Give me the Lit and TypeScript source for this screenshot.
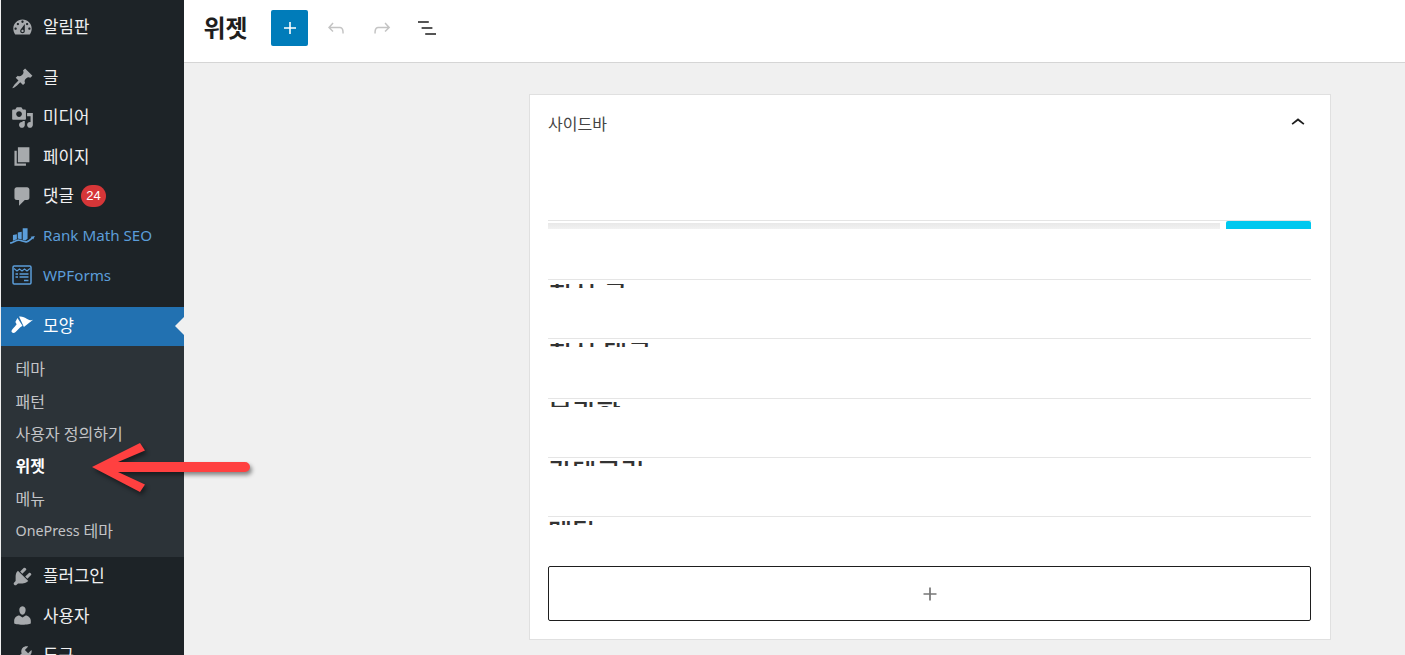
import { LitElement, html, css, svg } from "lit";
import { customElement } from "lit/decorators.js";

const P: Record<string, string> = {
  dash: "M3.76 16h12.48c1.1-1.37 1.76-3.11 1.76-5 0-4.42-3.58-8-8-8s-8 3.58-8 8c0 1.89.66 3.63 1.76 5zM10 4c.55 0 1 .45 1 1s-.45 1-1 1-1-.45-1-1 .45-1 1-1zM6 6c.55 0 1 .45 1 1s-.45 1-1 1-1-.45-1-1 .45-1 1-1zm8 0c.55 0 1 .45 1 1s-.45 1-1 1-1-.45-1-1 .45-1 1-1zm-5.37 5.55L12 7v6c0 1.1-.9 2-2 2s-2-.9-2-2c0-.57.24-1.08.63-1.45zM4 10c.55 0 1 .45 1 1s-.45 1-1 1-1-.45-1-1 .45-1 1-1zm12 0c.55 0 1 .45 1 1s-.45 1-1 1-1-.45-1-1 .45-1 1-1zm-5 3c0-.55-.45-1-1-1s-1 .45-1 1 .45 1 1 1 1-.45 1-1z",
  post: "M10.44 3.02l1.82-1.82 6.36 6.35-1.83 1.82c-1.05-.68-2.48-.57-3.41.36l-.75.75c-.92.93-1.04 2.35-.35 3.41l-1.83 1.82-2.41-2.41-2.8 2.79c-.42.42-3.38 2.71-3.8 2.29s1.86-3.39 2.28-3.81l2.79-2.79L4.1 9.36l1.83-1.82c1.05.69 2.48.57 3.4-.36l.75-.75c.93-.92 1.05-2.35.36-3.41z",
  media: "M13 11V4c0-.55-.45-1-1-1h-1.67L9 1H5L3.67 3H2c-.55 0-1 .45-1 1v7c0 .55.45 1 1 1h10c.55 0 1-.45 1-1zM7 4.5c1.38 0 2.5 1.12 2.5 2.5S8.38 9.5 7 9.5 4.5 8.38 4.5 7 5.62 4.5 7 4.5zM14 6h5v10.5c0 1.38-1.12 2.5-2.5 2.5S14 17.88 14 16.5s1.12-2.5 2.5-2.5c.17 0 .34.02.5.05V9h-3V6zm-4 8.05V13h2v3.5c0 1.38-1.12 2.5-2.5 2.5S7 17.88 7 16.5 8.12 14 9.5 14c.17 0 .34.02.5.05z",
  page: "M6 15V2h10v13H6zm-1 1h8v2H3V5h2v11z",
  comments: "M5 2h9c1.1 0 2 .9 2 2v7c0 1.1-.9 2-2 2h-2l-5 5v-5H5c-1.1 0-2-.9-2-2V4c0-1.1.9-2 2-2z",
  appearance: "M7 1.400C9.500 .9 12 2.400 14 3.400s3.800 1.500 5.200.7L11.200 10.400zM5.600 2.700L10 9.400l-1.900 1.200-1.100 1.100-3 3C2.500 16.200.3 15.600.4 14c.1-1 1.600-2.500 3-4l1.500-2-1.100-2z",
  plugins: "M13.11 4.36L9.87 7.6 8 5.73l3.24-3.24c.35-.34 1.05-.2 1.56.32.52.51.66 1.21.31 1.55zm-8 1.77l.91-1.12 9.01 9.01-1.19.84c-.71.71-2.63 1.16-3.82 1.16H6.14L4.9 17.26c-.59.59-1.54.59-2.12 0-.59-.58-.59-1.53 0-2.12l1.24-1.24v-3.88c0-1.13.4-3.19 1.09-3.89zm7.26 3.97l3.24-3.24c.34-.35 1.04-.21 1.55.31.52.51.66 1.21.31 1.55l-3.24 3.25z",
  users: "M10 9.25c-2.27 0-2.73-3.44-2.73-3.44C7 4.02 7.82 2 9.97 2c2.16 0 2.98 2.02 2.71 3.81 0 0-.41 3.44-2.68 3.44zm0 2.57L12.72 10c2.39 0 4.52 2.33 4.52 4.53v2.49s-3.65 1.13-7.24 1.13c-3.65 0-7.24-1.13-7.24-1.13v-2.49c0-2.25 1.94-4.48 4.47-4.48z",
  tools: "M16.68 9.77c-1.34 1.34-3.3 1.67-4.95.99l-5.41 6.52c-.99.99-2.59.99-3.58 0s-.99-2.59 0-3.57l6.52-5.42c-.68-1.65-.35-3.61.99-4.95 1.28-1.28 3.12-1.62 4.72-1.06l-2.89 2.89 2.82 2.82 2.86-2.87c.53 1.58.18 3.39-1.08 4.65zM3.81 16.21c.4.39 1.04.39 1.43 0 .4-.4.4-1.04 0-1.43-.39-.4-1.03-.4-1.43 0-.39.39-.39 1.03 0 1.43z",
};

const icon = (k: string) => html`<svg class="ico" viewBox="0 0 20 20" fill="currentColor"><path fill-rule="evenodd" d=${P[k]}></path></svg>`;

const rankMath = html`<svg class="ico wide" viewBox="0 0 24 20" fill="currentColor">
  <path d="M3.500 9.600L7 8.800V13.400l-3.500 1.200zM7.800 7.400l3.500-.8v7l-3.500-.9zM12.200 3.500h4.300v9.300l-2 1.600-2.300-.5z"></path>
  <path d="M1 16.800C4 16 6.500 14 9 14.200s4 1.800 6.500 1.400c2-.4 3.500-2 5.300-3.600" fill="none" stroke="currentColor" stroke-width="1.500"></path>
  <path d="M23 10.500l-3.800.6 2.300 2.500z"></path>
</svg>`;

const wpforms = html`<svg class="ico form" viewBox="0 0 20 20" fill="none" stroke="currentColor">
  <rect x="1" y="1" width="18" height="18" rx="1.200" stroke-width="1.500"></rect>
  <path d="M2 3.500l3 2.500 2.500-2 2.500 2 2.500-2 2.500 2 3-2.500" stroke-width="1.100"></path>
  <path d="M3.500 9h2.500M7.500 9h9M3.500 12h2.500M7.500 12h9M12 15.500h4.500" stroke-width="1.300"></path>
</svg>`;

type Item = { t: string; i: unknown; blue?: boolean; badge?: string };
const top: Item[] = [
  { t: "글", i: icon("post") },
  { t: "미디어", i: icon("media") },
  { t: "페이지", i: icon("page") },
  { t: "댓글", i: icon("comments"), badge: "24" },
  { t: "Rank Math SEO", i: rankMath, blue: true },
  { t: "WPForms", i: wpforms, blue: true },
];
const subs = ["테마", "패턴", "사용자 정의하기", "위젯", "메뉴"];
const bottom: Item[] = [
  { t: "플러그인", i: icon("plugins") },
  { t: "사용자", i: icon("users") },
  { t: "도구", i: icon("tools") },
];
const widgets = ["최신 글", "최신 댓글", "보관함", "카테고리", "메타"];

@customElement("app-root")
export class AppRoot extends LitElement {
  static styles = css`
    :host {
      display: block;
      position: relative;
      width: 1405px;
      height: 655px;
      overflow: hidden;
      background: #f0f0f0;
      font-family: "Noto Sans", "Noto Sans CJK KR", sans-serif;
    }
    .layout { display: flex; height: 655px; padding-left: 1px; box-sizing: border-box; }
    .side {
      width: 183px;
      flex: none;
      background: #1d2327;
      padding-top: 7.5px;
      box-sizing: border-box;
      overflow: hidden;
    }
    .item {
      display: flex;
      align-items: center;
      height: 39.3px;
      padding-left: 10px;
      color: #f0f0f1;
      font-size: 16.8px;
      line-height: 22px;
      white-space: nowrap;
      position: relative;
    }
    .item .ico { width: 23px; height: 23px; color: #a7aaad; flex: none; }
    .item .ico.wide { width: 27px; margin-left: -2px; margin-right: -2px; }
    .item .ico.form { width: 20px; height: 20px; margin-left: 1px; margin-right: 2px; }
    .item .label { margin-left: 9px; }
    .item.blue { color: #5b9dd9; font-size: 15.2px; }
    .item.blue .ico { color: #5b9dd9; }
    .group { margin-top: 11.7px; }
    .badge {
      margin-left: 7px;
      height: 22px;
      min-width: 25px;
      border-radius: 11px;
      background: #d63638;
      color: #fff;
      font-family: "Liberation Sans", sans-serif;
      font-size: 13px;
      display: flex;
      align-items: center;
      justify-content: center;
    }
    .active {
      margin-top: 12.7px;
      height: 39px;
      background: #2271b1;
      color: #fff;
    }
    .active .ico { color: #fff; }
    .active::after {
      content: "";
      position: absolute;
      right: 0;
      top: 10px;
      border: 9px solid transparent;
      border-right-color: #f0f0f0;
      border-left-width: 0;
    }
    .submenu { background: #2c3338; padding: 7px 0 9.5px; }
    .sub {
      height: 32.4px;
      display: flex;
      align-items: center;
      padding-left: 14.5px;
      font-size: 16px;
      line-height: 20px;
      color: #c3c4c7;
      white-space: nowrap;
    }
    .sub.on { color: #fff; font-weight: 700; }
    .sub .latin { font-size: 14.3px; margin-right: 4px; }
    .main { flex: 1; min-width: 0; }
    .head {
      height: 63px;
      box-sizing: border-box;
      background: #fff;
      border-bottom: 1px solid #d5d5d5;
      display: flex;
      align-items: center;
      padding: 0 0 6px 19.5px;
    }
    .head h1 {
      margin: 0;
      font-size: 24px;
      line-height: 30px;
      font-weight: 600;
      color: #1e1e1e;
      width: 67.5px;
    }
    .add {
      width: 37px;
      height: 36px;
      border-radius: 2px;
      background: #007cba;
      color: #fff;
      display: flex;
      align-items: center;
      justify-content: center;
    }
    .tool { width: 24px; height: 24px; fill: #c4c4c4; margin-left: 22px; }
    .tool.first { margin-left: 16px; }
    .tool.dark { fill: #1e1e1e; margin-left: 21px; }
    .add svg { width: 24px; height: 24px; fill: #fff; }
    .card {
      margin: 31px 0 0 345px;
      width: 802px;
      height: 546px;
      box-sizing: border-box;
      background: #fff;
      border: 1px solid #e0e0e0;
      padding: 0 19px 0 18px;
    }
    .card-title {
      height: 57px;
      box-sizing: border-box;
      padding-bottom: 1px;
      display: flex;
      align-items: center;
      justify-content: space-between;
      font-size: 16px;
      color: #444;
    }
    .card-title svg { width: 28px; height: 28px; fill: #1e1e1e; margin-right: -1px; }
    .search {
      margin-top: 68px;
      height: 10px;
      display: flex;
      gap: 6px;
      border-top: 1px solid #e4e4e4;
    }
    .search .field { flex: 1; height: 6px; margin-top: 2px; background: linear-gradient(#e8e8e8, #f1f1f1); }
    .search .btn { width: 85px; height: 8px; background: #00c8ef; border-radius: 2px 2px 0 0; }
    .widgets { margin-top: 48px; }
    .w { height: 59.3px; box-sizing: border-box; border-top: 1px solid #e5e5e5; padding-top: 3.5px; }
    .clip {
      height: 4.5px;
      overflow: hidden;
      font-size: 26.3px;
      line-height: 26px;
      font-weight: 500;
      color: #333;
    }
    .clip span { display: block; margin: -3px 0 0 0; white-space: nowrap; }
    .blockadd {
      margin-top: -9px;
      width: 100%;
      padding: 0;
      background: #fff;
      height: 55px;
      box-sizing: border-box;
      border: 1px solid #1e1e1e;
      border-radius: 2px;
      display: flex;
      align-items: center;
      justify-content: center;
    }
    .blockadd svg { width: 26px; height: 26px; fill: #777; }
    .arrow {
      position: absolute;
      left: 80px;
      top: 430px;
      width: 180px;
      height: 75px;
      overflow: visible;
      pointer-events: none;
      filter: drop-shadow(2px 3px 2px rgba(0, 0, 0, 0.45));
    }
  `;

  private row(it: Item) {
    return html`<div class="item ${it.blue ? "blue" : ""}">
      ${it.i}<span class="label">${it.t}</span>
      ${it.badge ? html`<span class="badge">${it.badge}</span>` : ""}
    </div>`;
  }

  render() {
    return html`<div class="layout">
        <nav class="side">
          ${this.row({ t: "알림판", i: icon("dash") })}
          <div class="group">${top.map((i) => this.row(i))}</div>
          <div class="item active">${icon("appearance")}<span class="label">모양</span></div>
          <div class="submenu">
            ${subs.map((s) => html`<div class="sub ${s === "위젯" ? "on" : ""}">${s}</div>`)}
            <div class="sub"><span class="latin">OnePress</span>테마</div>
          </div>
          <div>${bottom.map((i) => this.row(i))}</div>
        </nav>
        <main class="main">
          <header class="head">
            <h1>위젯</h1>
            <div class="add"><svg viewBox="0 0 24 24"><path d="M18 11.2h-5.2V6h-1.6v5.2H6v1.6h5.2V18h1.6v-5.2H18z"></path></svg></div>
            <svg class="tool first" viewBox="0 0 24 24"><path d="M18.3 11.7c-.6-.6-1.4-.9-2.3-.9H6.7l2.9-3.3-1.1-1-4.5 5L8.5 16l1-1-2.7-2.7H16c.5 0 .9.2 1.3.5 1 1 1 3.4 1 4.5v.3h1.5v-.2c0-1.5 0-4.3-1.5-5.7z"></path></svg>
            <svg class="tool" viewBox="0 0 24 24"><path d="M15.6 6.5l-1.1 1 2.9 3.3H8c-.9 0-1.7.3-2.3.9-1.4 1.5-1.4 4.2-1.4 5.6v.2h1.5v-.3c0-1.1 0-3.5 1-4.5.3-.3.7-.5 1.3-.5h9.2L14.5 15l1.1 1.1 4.6-4.6-4.6-5z"></path></svg>
            <svg class="tool dark" viewBox="0 0 24 24"><path d="M13.8 5.2H3v1.5h10.8V5.2zm-3.6 12v1.5H21v-1.5H10.2zm7.2-6H6.6v1.5h10.8v-1.5z"></path></svg>
          </header>
          <section class="card">
            <div class="card-title">
              <span>사이드바</span>
              <svg viewBox="0 0 24 24"><path d="M6.5 12.4L12 8l5.5 4.4-.9 1.2L12 10l-4.600 3.600z"></path></svg>
            </div>
            <div class="search"><div class="field"></div><div class="btn"></div></div>
            <div class="widgets">
              ${widgets.map((w) => html`<div class="w"><div class="clip"><span>${w}</span></div></div>`)}
            </div>
            <button class="blockadd">
              <svg viewBox="0 0 24 24"><path d="M18 11.2h-5.2V6h-1.6v5.2H6v1.6h5.2V18h1.6v-5.2H18z"></path></svg>
            </button>
          </section>
        </main>
      </div>
      ${svg`<svg class="arrow" viewBox="0 0 180 75">
        <path fill="#ff4040" d="M12 37L60 13l5 7.500L38 32H165a5 5 0 0 1 0 10H38l27 12.500L60 62z"></path>
      </svg>`}`;
  }
}
